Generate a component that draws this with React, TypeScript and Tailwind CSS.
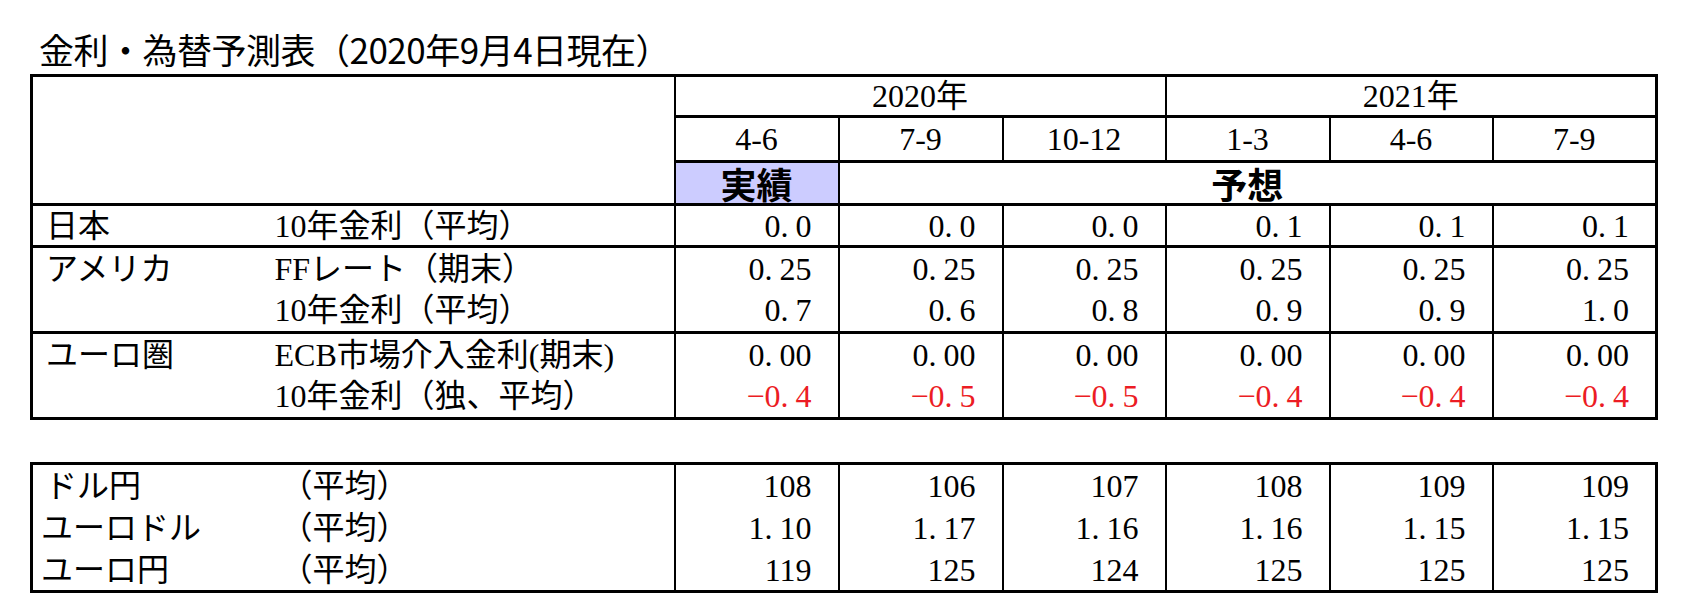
const serif = "font-['Liberation_Serif','Noto_Sans_CJK_JP',serif]";

const quarters = ["4-6", "7-9", "10-12", "1-3", "4-6", "7-9"];

type RateRow = {
  country: string;
  label: string;
  values: string[];
  red?: boolean;
  last?: boolean;
  h: string;
};

const rates: RateRow[] = [
  { country: "日本", label: "10年金利（平均）", values: ["0.0", "0.0", "0.0", "0.1", "0.1", "0.1"], last: true, h: "h-[42px]" },
  { country: "アメリカ", label: "FFレート（期末）", values: ["0.25", "0.25", "0.25", "0.25", "0.25", "0.25"], h: "h-[43px]" },
  { country: "", label: "10年金利（平均）", values: ["0.7", "0.6", "0.8", "0.9", "0.9", "1.0"], last: true, h: "h-[43px]" },
  { country: "ユーロ圏", label: "ECB市場介入金利(期末)", values: ["0.00", "0.00", "0.00", "0.00", "0.00", "0.00"], h: "h-[43px]" },
  { country: "", label: "10年金利（独、平均）", values: ["−0.4", "−0.5", "−0.5", "−0.4", "−0.4", "−0.4"], red: true, last: true, h: "h-[43px]" },
];

const fx = [
  { name: "ドル円", indent: "pl-[12px]", values: ["108", "106", "107", "108", "109", "109"] },
  { name: "ユーロドル", indent: "pl-[8px]", values: ["1.10", "1.17", "1.16", "1.16", "1.15", "1.15"] },
  { name: "ユーロ円", indent: "pl-[8px]", values: ["119", "125", "124", "125", "125", "125"] },
];

// Mincho-style numbers: the period sits in a half-width cell, leaving a gap after it
function Num({ v }: { v: string }) {
  const [a, b] = v.split(".");
  if (b === undefined) return <>{v}</>;
  return (
    <>
      {a}
      <span className="pr-[7px]">.</span>
      {b}
    </>
  );
}

function Cols() {
  return (
    <colgroup>
      <col className="w-[243px]" />
      <col className="w-[400px]" />
      <col className="w-[164px]" />
      <col className="w-[164px]" />
      <col className="w-[163px]" />
      <col className="w-[164px]" />
      <col className="w-[163px]" />
      <col className="w-[164px]" />
    </colgroup>
  );
}

export default function App() {
  return (
    <div className="min-h-[610px] bg-white pt-[29px] pl-[30px] text-black">
      <h1 className="h-[40px] pl-[9px] font-['Noto_Sans_CJK_JP',sans-serif] text-[35px] leading-[40px] font-normal tracking-[-0.5px]">
        金利・為替予測表（2020年9月4日現在）
      </h1>

      <table className={`mt-[5px] w-[1625px] table-fixed border-collapse border-[3px] border-black ${serif} text-[32px] leading-none`}>
        <Cols />
        <tbody>
          <tr className="h-[41px]">
            <td colSpan={2} rowSpan={3} className="border-r-2 border-b-[3px] border-black" />
            <td colSpan={3} className="border-b-[3px] border-black text-center">2020年</td>
            <td colSpan={3} className="border-l-2 border-b-[3px] border-black text-center">2021年</td>
          </tr>
          <tr className="h-[45px]">
            {quarters.map((q, i) => (
              <td key={i} className={`border-b-[3px] border-black text-center ${i > 0 ? "border-l-2" : ""}`}>
                {q}
              </td>
            ))}
          </tr>
          <tr className="h-[43px] font-['Noto_Sans_CJK_JP',sans-serif] text-[36px] font-bold">
            <td className="border-b-[3px] border-black bg-[#ccccff] text-center">実績</td>
            <td colSpan={5} className="border-l-2 border-b-[3px] border-black text-center">予想</td>
          </tr>
          {rates.map((r, ri) => (
            <tr key={ri} className={r.h}>
              <td className={`pl-[13px] whitespace-nowrap ${r.last ? "border-b-[3px] border-black" : ""}`}>{r.country}</td>
              <td className={`whitespace-nowrap ${r.last ? "border-b-[3px] border-black" : ""}`}>{r.label}</td>
              {r.values.map((v, i) => (
                <td
                  key={i}
                  className={`border-l-2 border-black pr-[26px] text-right ${r.red ? "text-[#ec1c24]" : ""} ${r.last ? "border-b-[3px]" : ""}`}
                >
                  <Num v={v} />
                </td>
              ))}
            </tr>
          ))}
        </tbody>
      </table>

      <table className={`mt-[42px] w-[1625px] table-fixed border-collapse border-[3px] border-black ${serif} text-[32px] leading-none`}>
        <Cols />
        <tbody>
          {fx.map((r, ri) => (
            <tr key={ri} className={ri === 2 ? "h-[42px]" : "h-[43px]"}>
              <td className={`${r.indent} whitespace-nowrap`}>{r.name}</td>
              <td className="pl-[6px] whitespace-nowrap">（平均）</td>
              {r.values.map((v, i) => (
                <td key={i} className="border-l-2 border-black pr-[26px] text-right">
                  <Num v={v} />
                </td>
              ))}
            </tr>
          ))}
        </tbody>
      </table>
    </div>
  );
}
